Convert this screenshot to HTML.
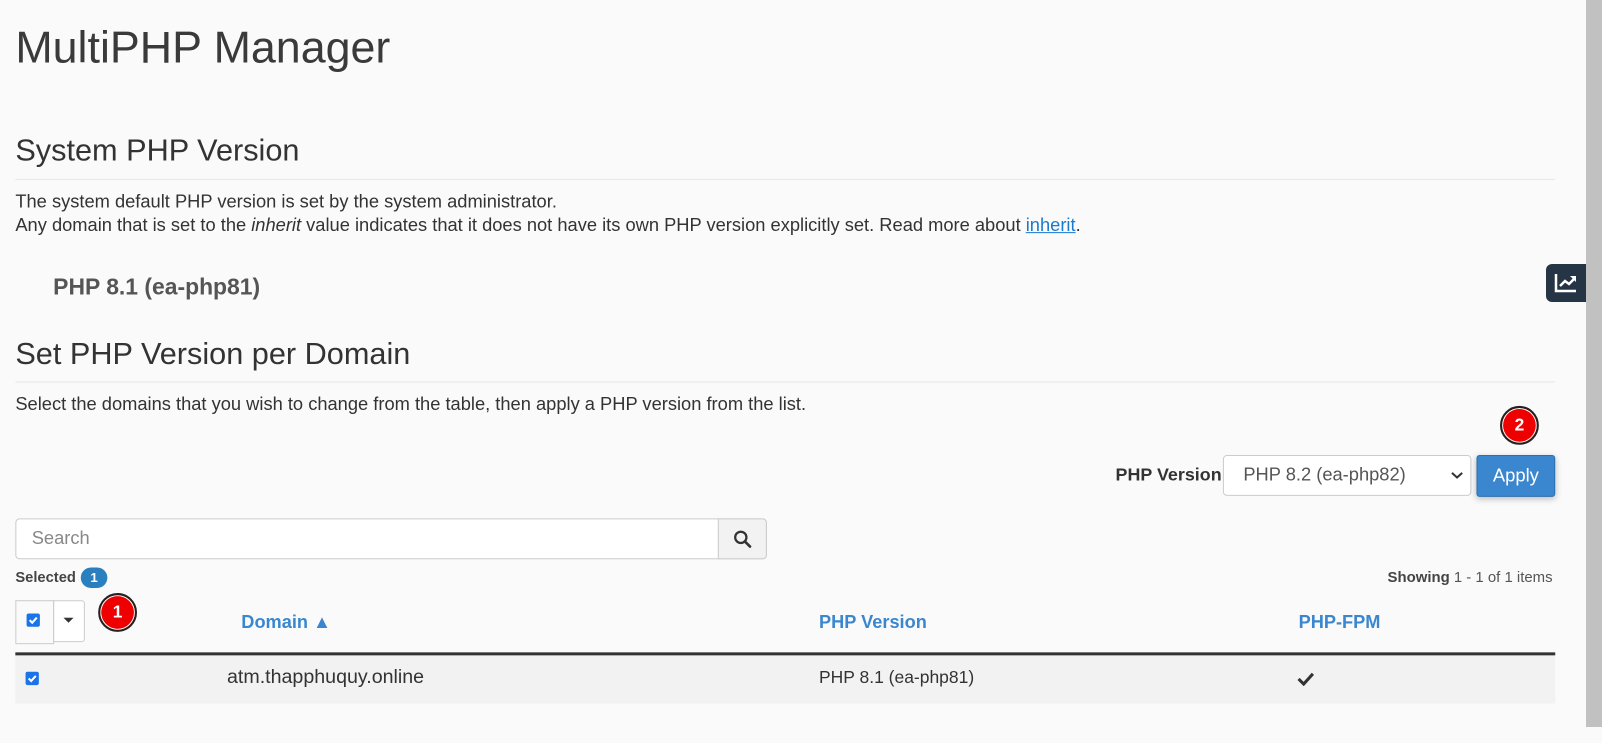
<!DOCTYPE html>
<html><head><meta charset="utf-8"><style>
body{margin:0;width:1602px;height:727px;background:#fafafa;font-family:"Liberation Sans",sans-serif;color:#333;position:relative;overflow:hidden}
#w{position:absolute;left:0;top:0;width:1602px;height:727px;transform:scale(1.0225);transform-origin:0 0}
.a{position:absolute;white-space:nowrap}
.hr{position:absolute;height:1px;background:#e8e8e8}
.badge{position:absolute;border-radius:50%;background:#e00;border:2px solid #222;box-shadow:0 0 0 1px #fff inset;color:#fff;font-weight:bold;font-size:17px;text-align:center}
.cb{position:absolute;width:13px;height:13px;background:#1a73e8;border-radius:2px}
.cb svg{position:absolute;left:1px;top:1px}
</style></head><body>
<div id="w">
<div class="a" style="left:15px;top:22px;font-size:43.8px;font-weight:300;color:#3a3a3a">MultiPHP Manager</div>
<div class="a" style="left:15px;top:131px;font-size:30px;color:#333">System PHP Version</div>
<div class="hr" style="left:15px;top:175px;width:1506px"></div>
<div class="a" style="left:15px;top:186px;font-size:17.9px;line-height:23px">The system default PHP version is set by the system administrator.<br>Any domain that is set to the <i>inherit</i> value indicates that it does not have its own PHP version explicitly set. Read more about <span style="color:#1a7ad0;text-decoration:underline">inherit</span>.</div>
<div class="a" style="left:52px;top:268px;font-size:22.4px;font-weight:bold;color:#555">PHP 8.1 (ea-php81)</div>
<div class="a" style="left:15px;top:330px;font-size:30px;color:#333">Set PHP Version per Domain</div>
<div class="hr" style="left:15px;top:373px;width:1506px"></div>
<div class="a" style="left:15px;top:385px;font-size:17.9px">Select the domains that you wish to change from the table, then apply a PHP version from the list.</div>

<div class="badge" style="left:1467px;top:397px;width:34px;height:34px;line-height:34px">2</div>
<div class="a" style="left:1091px;top:454px;font-size:17.5px;font-weight:bold">PHP Version</div>
<div class="a" style="left:1196px;top:445px;width:243px;height:40px;border:1px solid #ccc;border-radius:4px;background:#fff;box-sizing:border-box"></div>
<div class="a" style="left:1216px;top:454px;font-size:17.9px;color:#555">PHP 8.2 (ea-php82)</div>
<svg class="a" style="left:1419px;top:461px" width="12" height="8"><path d="M1 1.5l5 4.5 5-4.5" fill="none" stroke="#333" stroke-width="2"/></svg>
<div class="a" style="left:1444px;top:445px;width:77px;height:41px;background:#3a87cf;border:1px solid #2c6fae;border-radius:3px;box-sizing:border-box;box-shadow:0 2px 6px rgba(0,0,0,.25);color:#fff;font-size:18px;text-align:center;line-height:39px">Apply</div>

<div class="a" style="left:15px;top:507px;width:735px;height:40px;border:1px solid #ccc;border-radius:4px;background:#fff;box-sizing:border-box"></div>
<div class="a" style="left:702px;top:507px;width:48px;height:40px;border:1px solid #ccc;border-radius:0 4px 4px 0;background:#f2f2f2;box-sizing:border-box"></div>
<svg class="a" style="left:717px;top:518px" width="18" height="18"><circle cx="7.5" cy="7.5" r="5.5" fill="none" stroke="#333" stroke-width="2.2"/><path d="M11.5 11.5l5 5" stroke="#333" stroke-width="2.6" stroke-linecap="round"/></svg>
<div class="a" style="left:31px;top:516px;font-size:17.9px;color:#888">Search</div>

<div class="a" style="left:15px;top:557px;font-size:14.4px;font-weight:bold;color:#444">Selected</div>
<div class="a" style="left:79px;top:555px;width:26px;height:20px;border-radius:10px;background:#2a7fbf;color:#fff;font-size:13px;font-weight:bold;text-align:center;line-height:20px">1</div>
<div class="a" style="left:1357px;top:557px;font-size:14.6px;color:#555"><b style="color:#444">Showing</b> 1 - 1 of 1 items</div>

<div class="a" style="left:15px;top:587px;width:38px;height:43px;border:1px solid #ccc;box-sizing:border-box;background:#fafafa"></div>
<div class="a" style="left:52px;top:587px;width:31px;height:41px;border:1px solid #ccc;border-radius:0 3px 3px 0;box-sizing:border-box;background:#fff"></div>
<svg class="a" style="left:62px;top:604px" width="10" height="6"><path d="M0 0h10L5 5z" fill="#333"/></svg>
<div class="cb" style="left:26px;top:600px"><svg width="11" height="11"><path d="M2 5.5l2.5 2.5 4.5-5" fill="none" stroke="#fff" stroke-width="2"/></svg></div>
<div class="badge" style="left:96px;top:580px;width:34px;height:34px;line-height:34px">1</div>

<div class="a" style="left:236px;top:598px;font-size:17.8px;font-weight:bold;color:#3a87cf">Domain ▲</div>
<div class="a" style="left:801px;top:598px;font-size:17.8px;font-weight:bold;color:#3a87cf">PHP Version</div>
<div class="a" style="left:1270px;top:598px;font-size:17.8px;font-weight:bold;color:#3a87cf">PHP-FPM</div>
<div class="a" style="left:15px;top:638px;width:1506px;height:3px;background:#333"></div>
<div class="a" style="left:15px;top:641px;width:1506px;height:47px;background:#f2f2f2"></div>
<div class="cb" style="left:25px;top:657px"><svg width="11" height="11"><path d="M2 5.5l2.5 2.5 4.5-5" fill="none" stroke="#fff" stroke-width="2"/></svg></div>
<div class="a" style="left:222px;top:652px;font-size:19.2px">atm.thapphuquy.online</div>
<div class="a" style="left:801px;top:653px;font-size:17.1px">PHP 8.1 (ea-php81)</div>
<svg class="a" style="left:1268px;top:657px" width="18" height="14"><path d="M2 7l5 5 9-10" fill="none" stroke="#333" stroke-width="3"/></svg>
</div>

<div class="a" style="left:1546px;top:264px;width:40px;height:38px;background:#263545;border-radius:6px 0 0 6px"></div>
<svg class="a" style="left:1553px;top:271px" width="26" height="24"><path d="M3 3v17h20" fill="none" stroke="#fff" stroke-width="2.5"/><path d="M7 15l5-5 4 3 6-6" fill="none" stroke="#fff" stroke-width="2.5"/><path d="M17 5h6v6z" fill="#fff"/></svg>
<div class="a" style="left:1586px;top:0;width:16px;height:727px;background:#c1c1c1"></div>
</body></html>
